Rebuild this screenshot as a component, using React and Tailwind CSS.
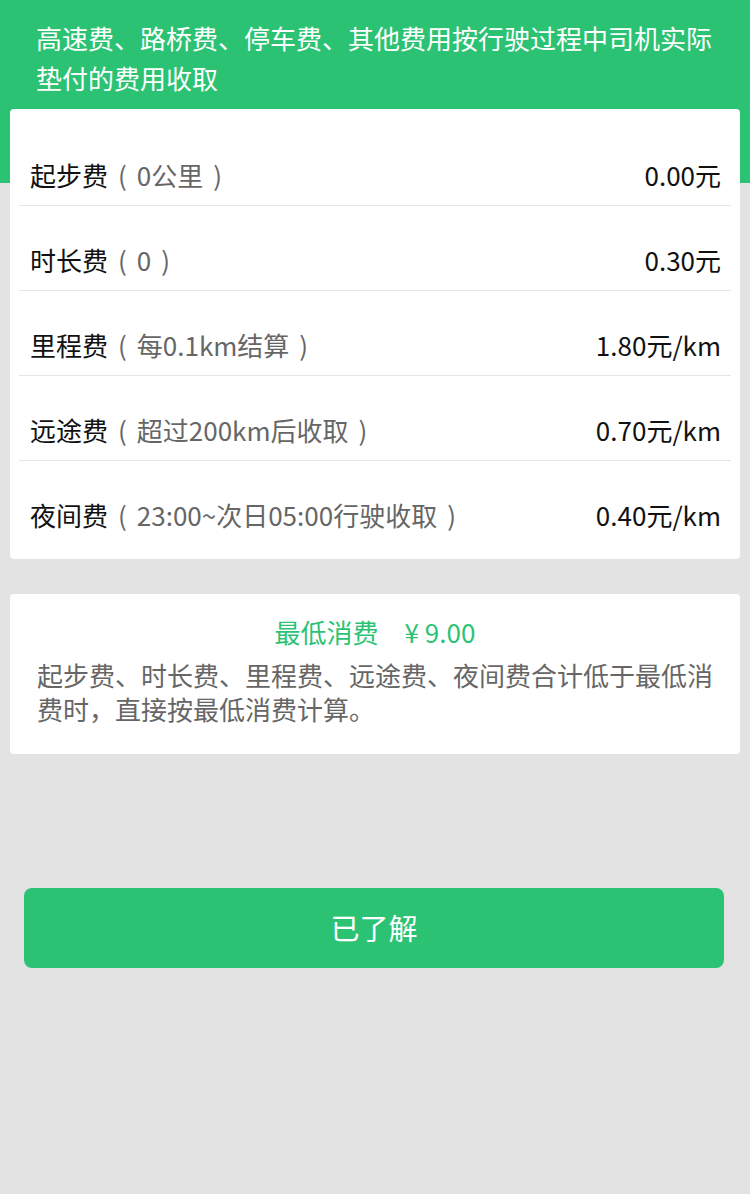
export default function App() {
  const rows = [
    { label: "起步费", note: "0公里", value: "0.00元" },
    { label: "时长费", note: "0", value: "0.30元" },
    { label: "里程费", note: "每0.1km结算", value: "1.80元/km" },
    { label: "远途费", note: "超过200km后收取", value: "0.70元/km" },
    { label: "夜间费", note: "23:00~次日05:00行驶收取", value: "0.40元/km" },
  ];
  return (
    <div
      className="min-h-[1194px] w-[750px] bg-[#e3e3e3]"
      style={{ fontFamily: '"Noto Sans CJK SC", "Noto Sans", sans-serif' }}
    >
      <div className="h-[183px] bg-[#2bc373] pl-[36px] pr-[30px] pt-[18px] text-[26px] leading-[40px] text-white">
        高速费、路桥费、停车费、其他费用按行驶过程中司机实际垫付的费用收取
      </div>
      <div className="relative mx-[10px] -mt-[74px] rounded-[4px] bg-white pt-[12px] pb-[14px]">
        {rows.map((r, i) => (
          <div
            key={i}
            className={
              "mx-[9px] flex items-center justify-between pl-[11px] pr-[10px] pt-[40px] pb-[16px] text-[26px] leading-[28px] " +
              (i < rows.length - 1 ? "border-b border-[#e5e5e5]" : "")
            }
          >
            <div className="text-[#111]">
              {r.label}
              <span className="text-[#666]">
                <span className="ml-[10px] mr-[10px]">(</span>
                {r.note}
                <span className="ml-[10px]">)</span>
              </span>
            </div>
            <div className="text-[#111]">{r.value}</div>
          </div>
        ))}
      </div>
      <div className="mx-[10px] mt-[35px] rounded-[4px] bg-white px-[27px] pt-[21px] pb-[28px]">
        <div className="flex justify-center text-[26px] leading-[34px] text-[#2bc373]">
          <span>最低消费</span>
          <span className="ml-[26px]">¥ 9.00</span>
        </div>
        <div className="mt-[9px] text-[26px] leading-[34px] text-[#666]">
          起步费、时长费、里程费、远途费、夜间费合计低于最低消费时，直接按最低消费计算。
        </div>
      </div>
      <div className="mx-[24px] mt-[134px] flex h-[80px] w-[700px] items-center justify-center rounded-[8px] bg-[#2bc373] text-[29px] text-white">
        已了解
      </div>
    </div>
  );
}
